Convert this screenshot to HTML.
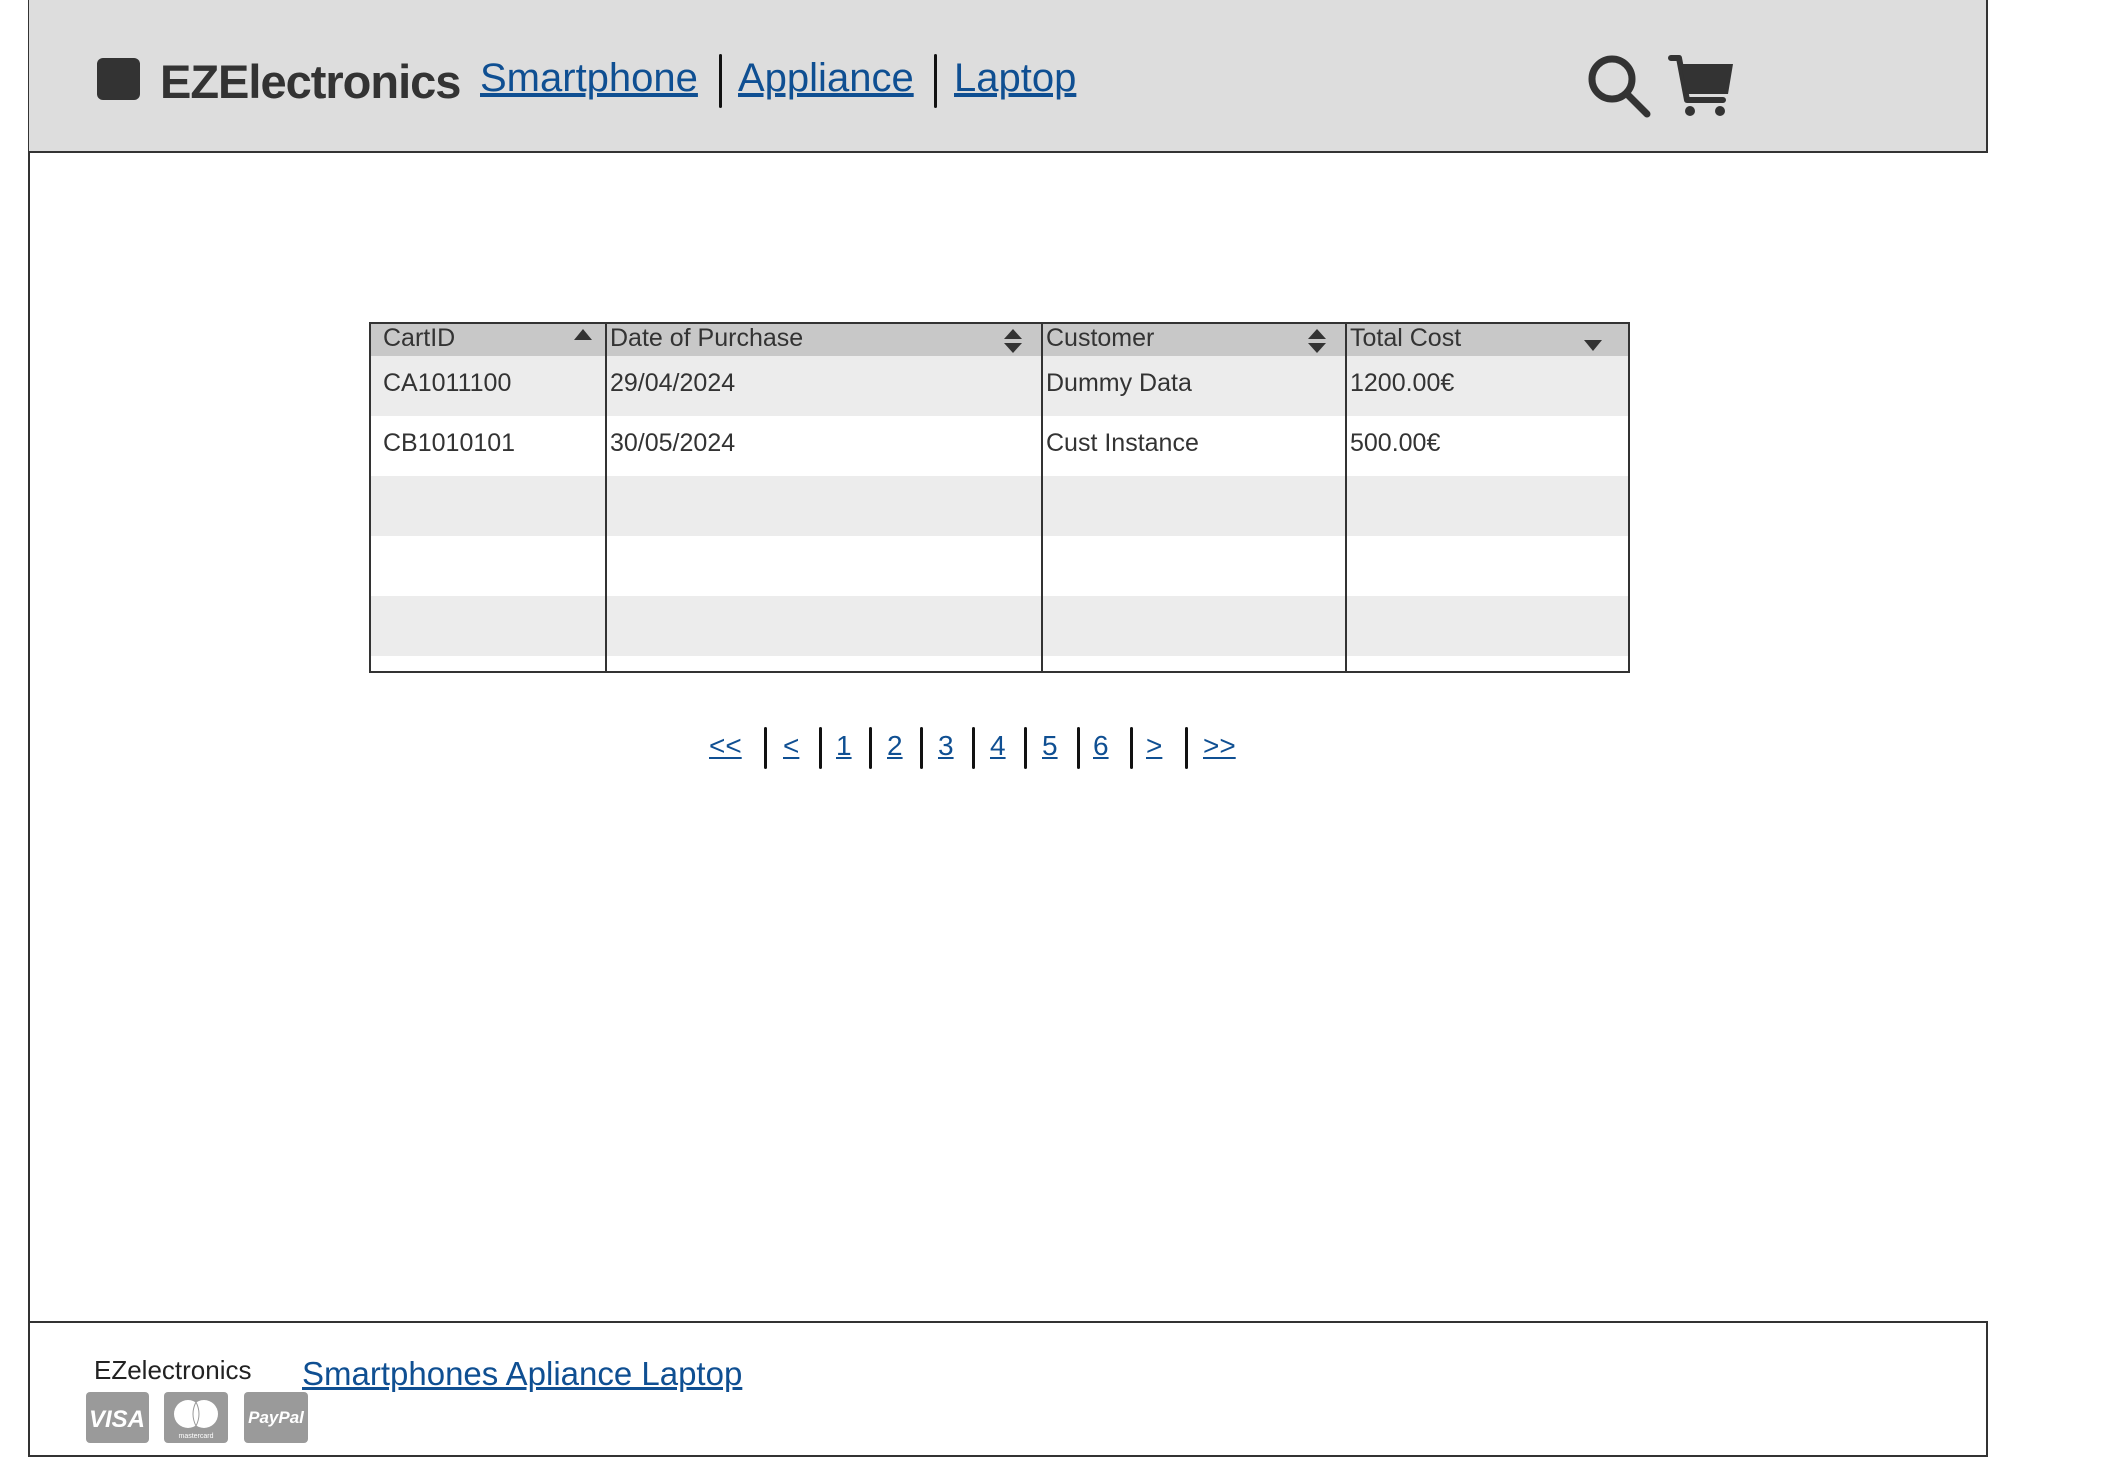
<!DOCTYPE html>
<html><head><meta charset="utf-8"><style>
*{margin:0;padding:0;box-sizing:border-box}
body{width:2104px;height:1457px;background:#fff;position:relative;overflow:hidden;font-family:"Liberation Sans",sans-serif;color:#333}
.a{position:absolute;white-space:nowrap}
a,.lk{color:#0f4f92;text-decoration:underline}
.sep{position:absolute;width:3px;background:#111;border-radius:2px}
.td{position:absolute;font-size:25px;color:#333}
</style></head><body>
<div class="a" style="left:28px;top:0;width:2px;height:1457px;background:#333"></div>
<div class="a" style="left:29px;top:0;width:1959px;height:153px;background:#dddddd;border-right:2px solid #333;border-bottom:2px solid #333"></div>
<div class="a" style="left:97px;top:58px;width:43px;height:42px;background:#333;border-radius:6px"></div>
<div class="a" style="left:160px;top:54px;font-size:47px;font-weight:bold;letter-spacing:-1px;color:#333">EZElectronics</div>
<div class="a lk" style="left:480px;top:56px;font-size:40px">Smartphone</div>
<div class="sep" style="left:719px;top:54px;height:54px"></div>
<div class="a lk" style="left:738px;top:56px;font-size:40px">Appliance</div>
<div class="sep" style="left:934px;top:54px;height:54px"></div>
<div class="a lk" style="left:954px;top:56px;font-size:40px">Laptop</div>
<svg class="a" style="left:1585px;top:52px" width="70" height="70" viewBox="0 0 70 70"><circle cx="27" cy="27" r="20" fill="none" stroke="#333" stroke-width="7"/><line x1="42" y1="42" x2="62" y2="62" stroke="#333" stroke-width="7" stroke-linecap="round"/></svg>
<svg class="a" style="left:1668px;top:54px" width="70" height="66" viewBox="0 0 70 66"><path d="M3 4h8l8 42h36" fill="none" stroke="#333" stroke-width="6" stroke-linecap="round" stroke-linejoin="round"/><path d="M13 10h52l-5 30H19z" fill="#333"/><circle cx="22" cy="57" r="5" fill="#333"/><circle cx="52" cy="57" r="5" fill="#333"/></svg>

<div class="a" style="left:369px;top:322px;width:1261px;height:351px;border:2px solid #333;background:#fff">
 <div class="a" style="left:0;top:0;width:1257px;height:32px;background:#c8c8c8"></div>
 <div class="a" style="left:0;top:32px;width:1257px;height:60px;background:#ececec"></div>
 <div class="a" style="left:0;top:152px;width:1257px;height:60px;background:#ececec"></div>
 <div class="a" style="left:0;top:272px;width:1257px;height:60px;background:#ececec"></div>
 <div class="a" style="left:234px;top:0;width:2px;height:349px;background:#333"></div>
 <div class="a" style="left:670px;top:0;width:2px;height:349px;background:#333"></div>
 <div class="a" style="left:974px;top:0;width:2px;height:349px;background:#333"></div>
 <div class="td" style="left:12px;top:0px">CartID</div>
 <div class="td" style="left:239px;top:0px">Date of Purchase</div>
 <div class="td" style="left:675px;top:0px">Customer</div>
 <div class="td" style="left:979px;top:0px">Total Cost</div>
 <svg class="a" style="left:203px;top:4px" width="18" height="12"><path d="M0 12L9 1L18 12z" fill="#333"/></svg>
 <svg class="a" style="left:633px;top:4px" width="18" height="26"><path d="M0 11L9 1L18 11zM0 15L9 25L18 15z" fill="#333"/></svg>
 <svg class="a" style="left:937px;top:4px" width="18" height="26"><path d="M0 11L9 1L18 11zM0 15L9 25L18 15z" fill="#333"/></svg>
 <svg class="a" style="left:1213px;top:16px" width="18" height="12"><path d="M0 0L9 11L18 0z" fill="#333"/></svg>
 <div class="td" style="left:12px;top:45px">CA1011100</div>
 <div class="td" style="left:239px;top:45px">29/04/2024</div>
 <div class="td" style="left:675px;top:45px">Dummy Data</div>
 <div class="td" style="left:979px;top:45px">1200.00€</div>
 <div class="td" style="left:12px;top:105px">CB1010101</div>
 <div class="td" style="left:239px;top:105px">30/05/2024</div>
 <div class="td" style="left:675px;top:105px">Cust Instance</div>
 <div class="td" style="left:979px;top:105px">500.00€</div>
</div>

<div style="font-size:28px">
<div class="a lk" style="left:709px;top:730px">&lt;&lt;</div>
<div class="sep" style="left:764px;top:727px;height:42px"></div>
<div class="a lk" style="left:783px;top:730px">&lt;</div>
<div class="sep" style="left:819px;top:727px;height:42px"></div>
<div class="a lk" style="left:836px;top:730px">1</div>
<div class="sep" style="left:869px;top:727px;height:42px"></div>
<div class="a lk" style="left:887px;top:730px">2</div>
<div class="sep" style="left:920px;top:727px;height:42px"></div>
<div class="a lk" style="left:938px;top:730px">3</div>
<div class="sep" style="left:972px;top:727px;height:42px"></div>
<div class="a lk" style="left:990px;top:730px">4</div>
<div class="sep" style="left:1024px;top:727px;height:42px"></div>
<div class="a lk" style="left:1042px;top:730px">5</div>
<div class="sep" style="left:1077px;top:727px;height:42px"></div>
<div class="a lk" style="left:1093px;top:730px">6</div>
<div class="sep" style="left:1130px;top:727px;height:42px"></div>
<div class="a lk" style="left:1146px;top:730px">&gt;</div>
<div class="sep" style="left:1185px;top:727px;height:42px"></div>
<div class="a lk" style="left:1203px;top:730px">&gt;&gt;</div>
</div>

<div class="a" style="left:29px;top:1321px;width:1959px;height:136px;border-top:2px solid #333;border-right:2px solid #333;border-bottom:2px solid #333"></div>
<div class="a" style="left:94px;top:1355px;font-size:26px;color:#222">EZelectronics</div>
<div class="a lk" style="left:302px;top:1355px;font-size:33px">Smartphones Apliance Laptop</div>
<svg class="a" style="left:86px;top:1392px" width="222" height="51">
 <rect x="0" y="0" width="63" height="51" rx="4" fill="#9a9a9a"/>
 <text x="31" y="35" text-anchor="middle" font-family="Liberation Sans" font-weight="bold" font-style="italic" font-size="24" fill="#fff">VISA</text>
 <rect x="78" y="0" width="64" height="51" rx="4" fill="#9a9a9a"/>
 <circle cx="102" cy="22" r="14" fill="#fff"/><circle cx="118" cy="22" r="14" fill="#fff"/>
 <path d="M110 10 Q104 22 110 34 Q116 22 110 10" fill="none" stroke="#9a9a9a" stroke-width="1"/>
 <text x="110" y="46" text-anchor="middle" font-family="Liberation Sans" font-size="7" fill="#fff">mastercard</text>
 <rect x="158" y="0" width="64" height="51" rx="4" fill="#9a9a9a"/>
 <text x="190" y="31" text-anchor="middle" font-family="Liberation Sans" font-weight="bold" font-style="italic" font-size="17" fill="#fff">PayPal</text>
</svg>
</body></html>
